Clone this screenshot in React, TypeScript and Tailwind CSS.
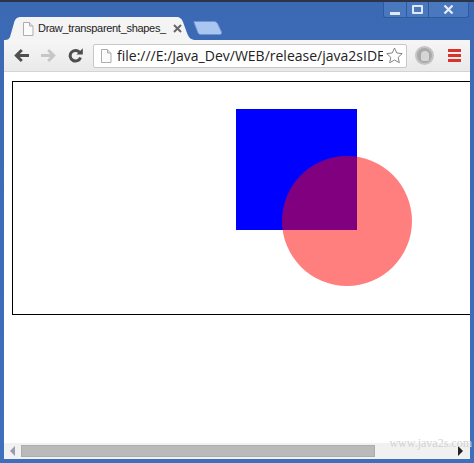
import React from 'react';

const PageIcon: React.FC = () => (
  <svg width="12" height="14" viewBox="0 0 12 14" className="shrink-0">
    <path d="M1.500 .5h6l3.500 3.500v9.500h-9.500z" fill="#fbfbfb" stroke="#adadad" />
    <path d="M7.500 .5v3.500h3.500" fill="#e6e6e6" stroke="#adadad" />
  </svg>
);

const BackIcon: React.FC<{ color: string; flip?: boolean; className?: string }> = ({ color, flip, className }) => (
  <svg width="15" height="15" viewBox="0 0 15 15" className={className}>
    <g transform={flip ? 'matrix(-1 0 0 1 15 0)' : undefined} fill="none" stroke={color} strokeWidth="3">
      <path d="M7.800 2L2.300 7.500l5.500 5.500" />
      <path d="M3 7.500h12" />
    </g>
  </svg>
);

const ReloadIcon: React.FC = () => (
  <svg width="15" height="15" viewBox="0 0 15 15" className="ml-[12px]">
    <path d="M11.500 4.300A5.300 5.300 0 1 0 12.500 9.500" fill="none" stroke="#4d4d4d" strokeWidth="3" />
    <path d="M8.500 6.500h6.300V.2z" fill="#4d4d4d" />
  </svg>
);

const TabBar: React.FC = () => (
  <div className="flex h-[38px] shrink-0 items-end pl-[1px]">
    <div className="relative h-[23px] w-[191px]">
      <svg width="191" height="23" viewBox="0 0 191 23" className="absolute inset-0">
        <path d="M0 23c3 0 4-1 5-3l4-14c1-4 3-6 7-6h155c4 0 6 2 7 5l4 11c2 5 4 7 9 7z" fill="#f4f4f4" />
      </svg>
      <div className="relative flex h-full items-center pl-[17px]">
        <PageIcon />
        <span className="ml-[4px] w-[127px] whitespace-nowrap font-['Liberation_Sans',sans-serif] text-[11px] tracking-[-.3px] text-[#222]">
          Draw_transparent_shapes_
        </span>
        <svg width="9" height="9" viewBox="0 0 9 9" className="ml-[8px]">
          <path d="M1 1l7 7M8 1L1 8" stroke="#666" strokeWidth="2" />
        </svg>
      </div>
    </div>
    <svg width="30" height="14" viewBox="0 0 30 14" className="-ml-[3px] mb-[5px]">
      <path d="M1 .5h20c2 0 3 1 4 3l3.500 7.500c.5 1.500 0 2.500-2 2.500H8c-2 0-3-1-3.500-3L1 1.500z" fill="#a9c6f2" stroke="#6f94d0" />
    </svg>
  </div>
);

const WindowButtons: React.FC = () => (
  <div className="absolute right-[5px] top-0 flex h-[16px] items-stretch rounded-b-[3px] border border-t-0 border-[#2f5a9e] bg-[#4a78bf]">
    <div className="flex w-[23px] items-end justify-center border-r border-[#2f5a9e] pb-[2px]">
      <div className="h-[3px] w-[10px] bg-[#dfe8f5]" />
    </div>
    <div className="flex w-[22px] items-center justify-center border-r border-[#2f5a9e]">
      <div className="h-[9px] w-[11px] rounded-[1px] border-2 border-[#dfe8f5]" />
    </div>
    <div className="flex w-[39px] items-center justify-center">
      <svg width="11" height="9" viewBox="0 0 11 9">
        <path d="M1.500 .5l8 8M9.500 .5l-8 8" stroke="#e6edf8" strokeWidth="2.200" />
      </svg>
    </div>
  </div>
);

const Toolbar: React.FC = () => (
  <div className="flex h-[32px] shrink-0 items-center border-b border-[#d4d4d4] bg-gradient-to-b from-[#f6f6f6] to-[#e9e9e9] pl-[10px]">
    <BackIcon color="#505050" />
    <BackIcon color="#c6c6c6" flip className="ml-[12px]" />
    <ReloadIcon />
    <div className="ml-[10px] flex h-[24px] w-[314px] shrink-0 items-center rounded-[2px] border border-[#c8c8c8] bg-white pl-[6px]">
      <PageIcon />
      <span className="ml-[5px] w-[266px] overflow-hidden whitespace-nowrap text-[14px] text-[#222]">
        file:///E:/Java_Dev/WEB/release/java2sIDE
      </span>
      <svg width="17" height="17" viewBox="0 0 17 17" className="ml-[3px] shrink-0">
        <path d="M8.500 1l2.300 5 5.400.6-4 3.700 1.100 5.400-4.800-2.700-4.800 2.700 1.100-5.400-4-3.700 5.400-.6z" fill="#fff" stroke="#777" strokeWidth=".9" />
      </svg>
    </div>
    <div className="ml-[8px] flex h-[19px] w-[19px] items-center justify-center rounded-full border-2 border-[#c4c4c4] bg-[#a9a9a9]">
      <div className="h-[10px] w-[8px] rounded-t-[4px] rounded-b-[2px] bg-[#d6d6d6]" />
    </div>
    <div className="ml-[14px] flex w-[13px] flex-col gap-[2px]">
      <div className="h-[3px] bg-[#d9332b]" />
      <div className="h-[3px] bg-[#d9332b]" />
      <div className="h-[3px] bg-[#d9332b]" />
    </div>
  </div>
);

const Scrollbar: React.FC = () => (
  <div className="flex h-[16px] shrink-0 items-center bg-[#f1f1f1]">
    <div className="ml-[6px] h-0 w-0 border-y-[5px] border-r-[5px] border-y-transparent border-r-[#9a9ab0]" />
    <div className="ml-[6px] h-[12px] w-[354px] border border-[#adadad] bg-[#bababa]" />
    <div className="ml-auto mr-[7px] h-0 w-0 border-y-[5px] border-l-[5px] border-y-transparent border-l-[#222]" />
  </div>
);

const App: React.FC = () => {
  return (
    <div className="relative flex h-[463px] w-[474px] flex-col overflow-hidden border-t-2 border-t-[#2b3448] bg-gradient-to-b from-[#3c69b3] to-[#3d6fbd] px-[4px] pb-[4px] font-['Open_Sans','Liberation_Sans',sans-serif]">
      <WindowButtons />
      <TabBar />
      <Toolbar />
      <div className="flex min-h-0 flex-1 flex-col bg-white">
        <div className="ml-[8px] mt-[9px] h-[234px] overflow-hidden border border-r-0 border-black bg-white">
          <svg width="458" height="232" viewBox="0 0 458 232" className="block">
            <rect x="223" y="27" width="121" height="121" fill="#0000ff" />
            <circle cx="334" cy="139" r="65" fill="#ff0000" fillOpacity="0.5" />
          </svg>
        </div>
        <div className="flex-1" />
        <Scrollbar />
      </div>
      <span className="absolute bottom-[11px] right-[2px] whitespace-nowrap font-['Liberation_Serif',serif] text-[12px] text-[#d2d2d2]">
        www.java2s.com
      </span>
    </div>
  );
};

export default App;
